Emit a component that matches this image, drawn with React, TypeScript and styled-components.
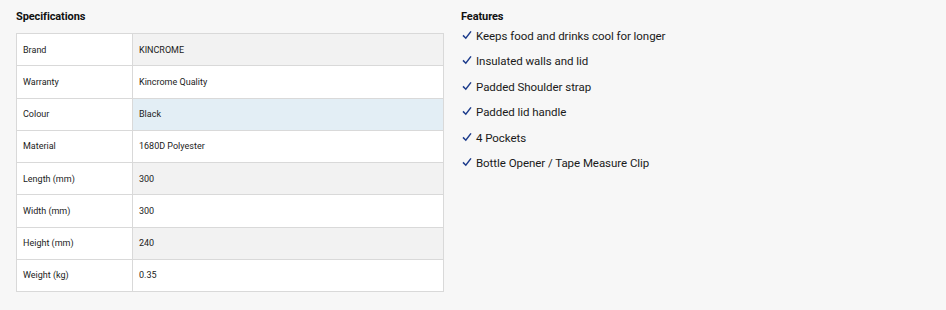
import React from 'react';
import styled, { createGlobalStyle } from 'styled-components';

const GlobalStyle = createGlobalStyle`
    html, body {
        margin: 0;
        padding: 0;
        background: #f7f7f7;
    }
    body {
        font-family: Roboto, "Liberation Sans", sans-serif;
        color: #1a1a1a;
    }
`;

/**
 * 전체 (좌: 사양표, 우: 특징)
 */
const Page = styled.div`
    width: 946px;
    height: 310px;
    box-sizing: border-box;
    padding: 10px 16px 0 16px;
    display: flex;
    gap: 17px;
`;

const SpecColumn = styled.section`
    width: 428px;
`;

const FeatureColumn = styled.section``;

const Heading = styled.h3<{ $tight?: boolean }>`
    margin: 0 0 ${(p) => (p.$tight ? '0' : '9px')} 0;
    font-size: 11px;
    font-weight: 700;
    line-height: 14px;
    letter-spacing: -0.1px;
    color: #111;
`;

const SpecTable = styled.table`
    width: 428px;
    border-collapse: collapse;
    table-layout: fixed;
    font-size: 9px;
    color: #222;
`;

const Row = styled.tr<{ $shade?: 'gray' | 'blue' }>`
    height: 32.25px;
    td:last-child {
        background: ${(p) =>
            p.$shade === 'gray' ? '#f2f2f2' : p.$shade === 'blue' ? '#e3eef5' : '#fff'};
    }
`;

const Cell = styled.td`
    border: 1px solid #d9d9d9;
    background: #fff;
    padding: 0 0 0 6px;
    vertical-align: middle;
`;

const FeatureList = styled.ul`
    list-style: none;
    margin: -1px 0 0 0;
    padding: 0;
`;

const FeatureItem = styled.li`
    display: flex;
    align-items: center;
    height: 25.5px;
    font-size: 11.5px;
    color: #1a1a1a;
    letter-spacing: -0.05px;
`;

const Tick = styled.svg`
    width: 10px;
    height: 10px;
    margin: 0 4px 2px 1px;
    flex: none;
`;

const Check = () => (
    <Tick viewBox="0 0 10 10">
        <path d="M1 5.4 L3.8 8.2 L9 1.4" fill="none" stroke="#1d3c8c" strokeWidth="1.5" />
    </Tick>
);

const specs: Array<[string, string, ('gray' | 'blue')?]> = [
    ['Brand', 'KINCROME', 'gray'],
    ['Warranty', 'Kincrome Quality'],
    ['Colour', 'Black', 'blue'],
    ['Material', '1680D Polyester'],
    ['Length (mm)', '300', 'gray'],
    ['Width (mm)', '300'],
    ['Height (mm)', '240', 'gray'],
    ['Weight (kg)', '0.35'],
];

const features = [
    'Keeps food and drinks cool for longer',
    'Insulated walls and lid',
    'Padded Shoulder strap',
    'Padded lid handle',
    '4 Pockets',
    'Bottle Opener / Tape Measure Clip',
];

const App = () => (
    <>
        <GlobalStyle />
        <Page>
            <SpecColumn>
                <Heading>Specifications</Heading>
                <SpecTable>
                    <colgroup>
                        <col style={{ width: 116 }} />
                        <col />
                    </colgroup>
                    <tbody>
                        {specs.map(([k, v, shade]) => (
                            <Row key={k} $shade={shade}>
                                <Cell>{k}</Cell>
                                <Cell>{v}</Cell>
                            </Row>
                        ))}
                    </tbody>
                </SpecTable>
            </SpecColumn>
            <FeatureColumn>
                <Heading $tight>Features</Heading>
                <FeatureList>
                    {features.map((f) => (
                        <FeatureItem key={f}>
                            <Check />
                            {f}
                        </FeatureItem>
                    ))}
                </FeatureList>
            </FeatureColumn>
        </Page>
    </>
);

export default App;
